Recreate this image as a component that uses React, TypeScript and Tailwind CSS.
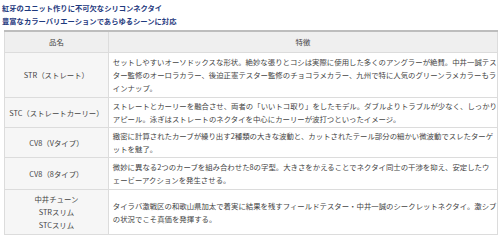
import React from "react";

type Row = {
  name: string[];
  lines: string[];
  h: string;
};

const ROWS: Row[] = [
  {
    name: ["STR（ストレート）"],
    lines: [
      "セットしやすいオーソドックスな形状。絶妙な張りとコシは実際に使用した多くのアングラーが絶賛。中井一誠テス",
      "ター監修のオーロラカラー、後迫正憲テスター監修のチョコラメカラー、九州で特に人気のグリーンラメカラーもラ",
      "インナップ。",
    ],
    h: "h-[45px]",
  },
  {
    name: ["STC（ストレートカーリー）"],
    lines: [
      "ストレートとカーリーを融合させ、両者の「いいトコ取り」をしたモデル。ダブルよりトラブルが少なく、しっかり",
      "アピール。泳ぎはストレートのネクタイを中心にカーリーが波打つといったイメージ。",
    ],
    h: "h-[30px]",
  },
  {
    name: ["CV8（Vタイプ）"],
    lines: [
      "緻密に計算されたカーブが繰り出す2種類の大きな波動と、カットされたテール部分の細かい微波動でスレたターゲ",
      "ットを魅了。",
    ],
    h: "h-[30px]",
  },
  {
    name: ["CV8（8タイプ）"],
    lines: [
      "微妙に異なる2つのカーブを組み合わせた8の字型。大きさをかえることでネクタイ同士の干渉を抑え、安定したウ",
      "ェービーアクションを発生させる。",
    ],
    h: "h-[32px]",
  },
  {
    name: ["中井チューン", "STRスリム", "STCスリム"],
    lines: [
      "タイラバ激戦区の和歌山県加太で着実に結果を残すフィールドテスター・中井一誠のシークレットネクタイ。激シブ",
      "の状況でこそ真価を発揮する。",
    ],
    h: "h-[45px]",
  },
];

export default function App() {
  return (
    <div
      className="w-[500px] h-[244px] bg-white px-[2px] pt-[2px] overflow-hidden"
      style={{ fontFamily: '"Noto Sans CJK JP", "Noto Sans", sans-serif' }}
    >
      <p className="text-[7.3px] leading-[13px] font-bold text-[#1f3a7e]">
        紅牙のユニット作りに不可欠なシリコンネクタイ
      </p>
      <p className="text-[7.3px] leading-[13px] font-bold text-[#1f3a7e]">
        豊富なカラーバリエーションであらゆるシーンに対応
      </p>

      <table className="mt-[2px] ml-[2px] w-[494px] border-collapse border-t-2 border-t-[#bdbdbd] text-[7.4px] leading-[13px] text-[#444]">
        <thead>
          <tr className="h-[21px] bg-[#efefef]">
            <th className="w-[109px] border border-[#dcdcdc] font-normal text-center">品名</th>
            <th className="border border-[#dcdcdc] font-normal text-center">特徴</th>
          </tr>
        </thead>
        <tbody>
          {ROWS.map((row, i) => (
            <tr key={i} className={row.h}>
              <td className="border border-[#dcdcdc] bg-[#f6f6f6] text-center align-middle">
                {row.name.map((n, j) => (
                  <div key={j}>{n}</div>
                ))}
              </td>
              <td className="border border-[#dcdcdc] pl-[4px] align-middle whitespace-nowrap">
                {row.lines.map((l, j) => (
                  <div key={j}>{l}</div>
                ))}
              </td>
            </tr>
          ))}
        </tbody>
      </table>
    </div>
  );
}
